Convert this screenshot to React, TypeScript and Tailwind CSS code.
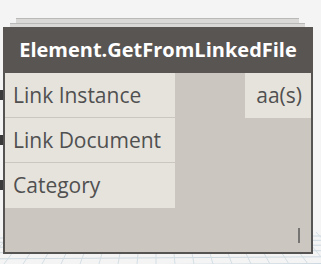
import React from "react";

function Grid() {
  const lines: React.ReactNode[] = [];
  for (let i = 0; i < 8; i++) {
    const y = 238 + i * 4 + i * i * 0.3;
    lines.push(<line key={"h" + i} x1={0} y1={y} x2={321} y2={y - 2} stroke="#cdd9e0" strokeWidth={1} />);
  }
  for (let i = 0; i < 22; i++) {
    const x = i * 16 - 20;
    lines.push(<line key={"v" + i} x1={x} y1={232} x2={x + (i - 11) * 3} y2={264} stroke="#d3dee4" strokeWidth={1} />);
  }
  return (
    <svg className="absolute left-0 top-0" width={321} height={264} viewBox="0 0 321 264">
      {lines}
    </svg>
  );
}

const font = { fontFamily: '"Open Sans", sans-serif' };

function InputRow({ label, last }: { label: string; last?: boolean }) {
  return (
    <div className={"relative flex h-[45px] items-center bg-[#e6e3dd] pl-[8px] " + (last ? "" : "border-b border-[#cbc7bf]")}>
      <div className="absolute left-[-5px] top-[17px] h-[10px] w-[3px] bg-[#3a3a3a]" />
      <span className="text-[21px] leading-none text-[#505050]" style={font}>{label}</span>
    </div>
  );
}

export default function App() {
  return (
    <div className="relative h-[264px] w-[321px] overflow-hidden bg-[#f4f4f4]">
      <Grid />
      <div className="relative pt-[18px]">
        <div className="ml-[16px] h-[5px] w-[283px] border-t border-[#b9b9b7] bg-[#d9d8d6]" />
        <div className="ml-[10px] h-[4px] w-[295px] border-t border-[#b9b9b7] bg-[#d9d8d6]" />
        <div className="ml-[3px] w-[310px]">
          <div className="flex h-[46px] items-center justify-center bg-[#585553]">
            <span className="text-[20px] font-bold leading-none text-white" style={font}>
              Element.GetFromLinkedFile
            </span>
          </div>
          <div className="relative flex h-[181px] border-x-2 border-b-2 border-[#555452] bg-[#cbc7c0]">
            <div className="flex w-[170px] flex-col">
              <InputRow label="Link Instance" />
              <InputRow label="Link Document" />
              <InputRow label="Category" last />
            </div>
            <div className="flex flex-1 flex-col items-end">
              <div className="flex h-[45px] w-[66px] items-center justify-end bg-[#e6e3dd] pr-[9px]">
                <span className="text-[21px] leading-none text-[#505050]" style={font}>aa(s)</span>
              </div>
              <div className="flex-1" />
              <div className="mb-[9px] mr-[11px] h-[15px] w-[2px] bg-[#777574]" />
            </div>
          </div>
        </div>
      </div>
    </div>
  );
}
